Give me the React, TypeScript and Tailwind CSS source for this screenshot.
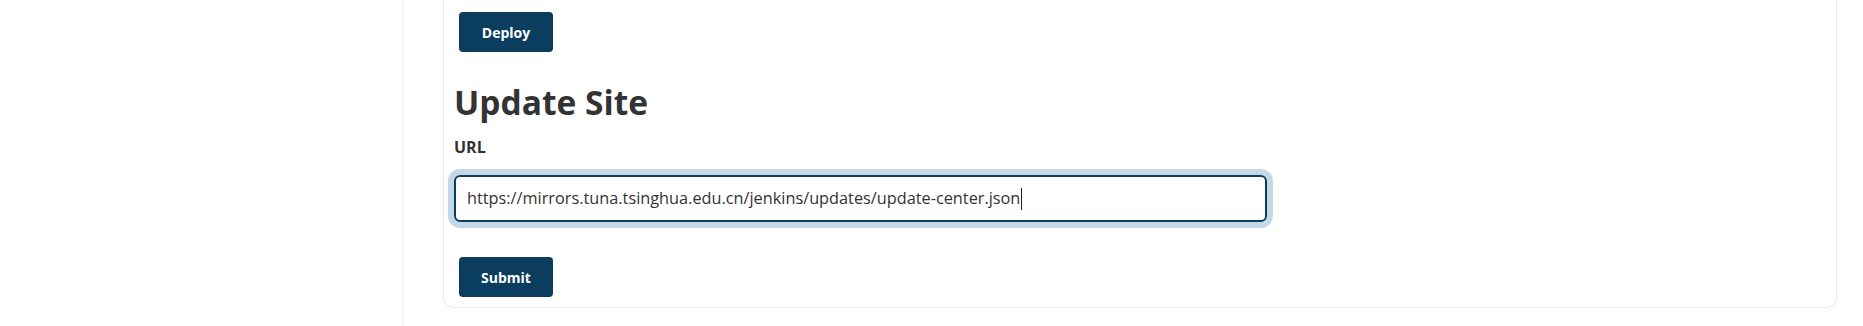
const font = { fontFamily: '"Open Sans", "Noto Sans", sans-serif' };

const Button = ({ label }: { label: string }) => (
  <button
    type="button"
    className="ml-[5px] flex h-[40px] w-[94px] items-center justify-center rounded-[4px] bg-[#0b3d5f] text-[14px] font-bold text-white"
  >
    {label}
  </button>
);

export default function App() {
  return (
    <div className="flex h-[326px] w-full bg-white text-[#333]" style={font}>
      <div className="h-full w-[403px] shrink-0 border-r border-[#f0f0f0]" />

      <div className="pl-[40px]">
        <div className="w-[1394px] rounded-b-[10px] border border-t-0 border-[#ebebeb] px-[10px] pt-[12px] pb-[10px]">
          <Button label="Deploy" />

          <h1 className="mt-[30px] text-[33.5px] leading-[41px] font-bold">Update Site</h1>

          <div className="mt-[12px] text-[16px] leading-[24px] font-bold">URL</div>

          <div className="mt-[16px] flex h-[47px] w-[813px] items-center rounded-[6px] border-2 border-[#0b3d5f] px-[11px] text-[16.3px] shadow-[0_0_0_6px_#c3d9e8]">
            <span>https://mirrors.tuna.tsinghua.edu.cn/jenkins/updates/update-center.json</span>
            <span className="ml-px h-[22px] w-px bg-[#222]" />
          </div>

          <div className="mt-[35px]">
            <Button label="Submit" />
          </div>
        </div>
      </div>
    </div>
  );
}
